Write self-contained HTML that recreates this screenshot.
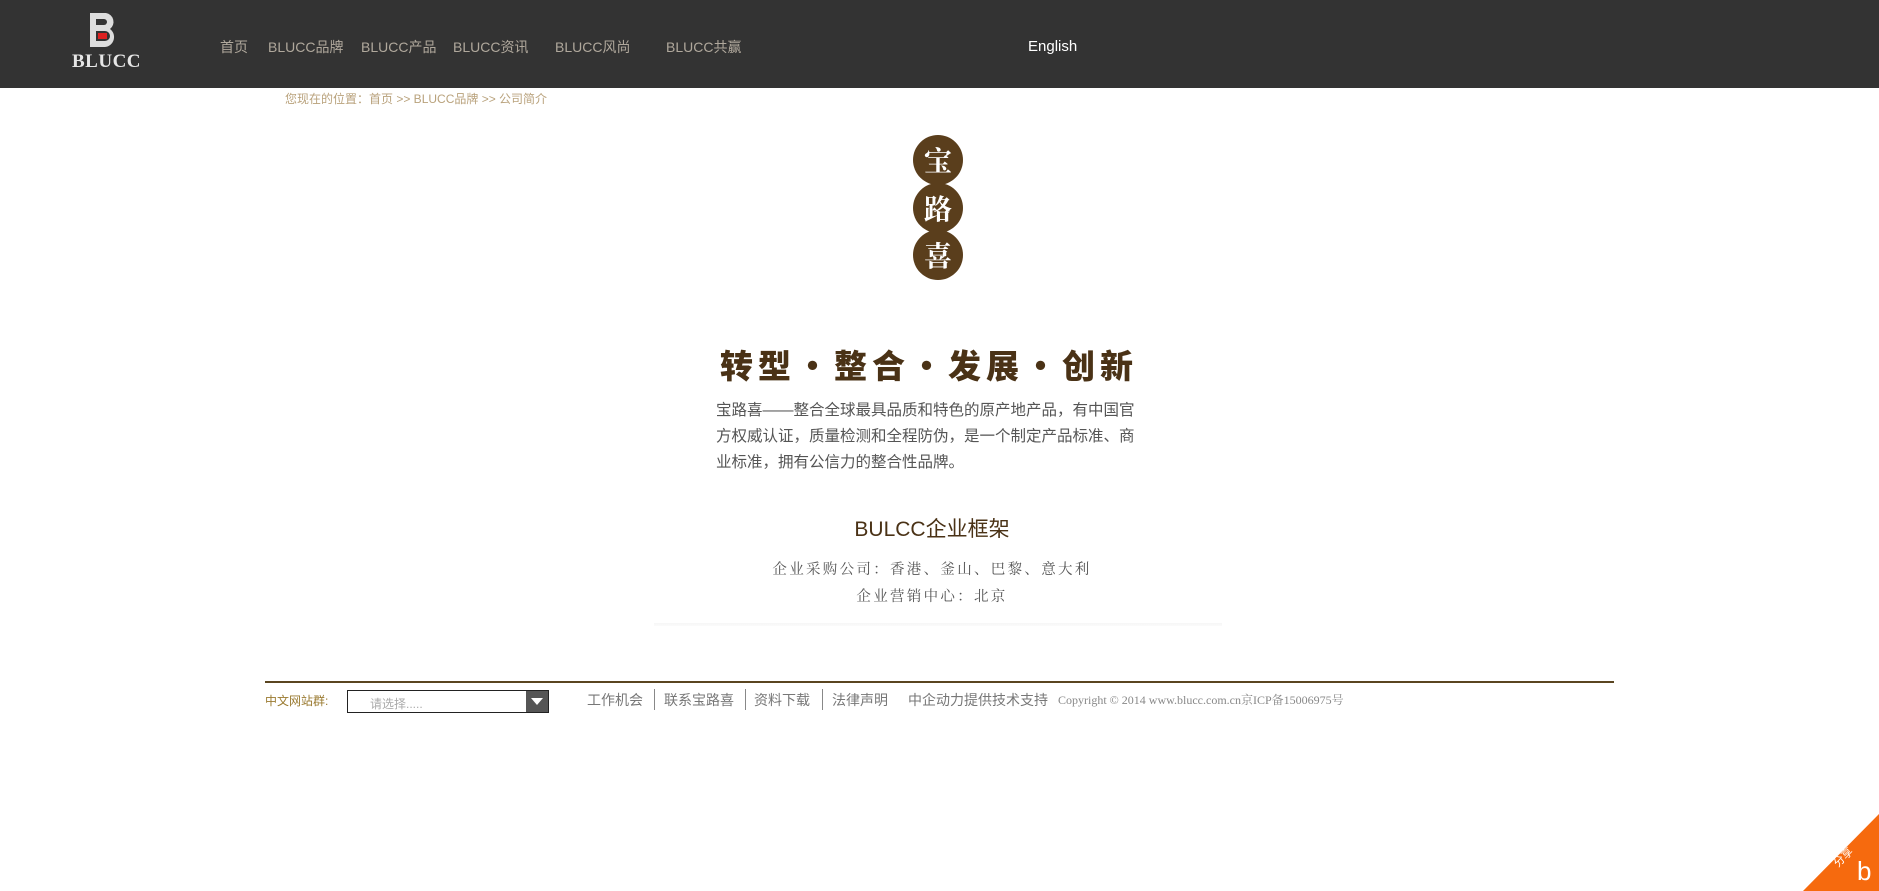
<!DOCTYPE html>
<html><head><meta charset="utf-8"><style>
*{margin:0;padding:0;box-sizing:border-box}
body{width:1879px;height:891px;background:#fff;position:relative;overflow:hidden;font-family:"Liberation Sans","Noto Sans CJK SC",sans-serif}
.a{position:absolute;white-space:nowrap}
#hd{position:absolute;left:0;top:0;width:1879px;height:88px;background:#333}
.nav{color:#b0a89c;font-size:14px;top:37px}
.c{position:absolute;left:913px;width:50px;height:50px;border-radius:50%;background:#5a3e1c;color:#fff;font-family:"Noto Serif CJK SC",serif;font-weight:bold;font-size:28px;text-align:center;line-height:50px}
.lk{color:#777;font-size:14px;top:690px}
.sep{position:absolute;top:689px;width:1px;height:21px;background:#888}
</style></head><body>
<div id="hd"></div>
<svg class="a" style="left:88px;top:11px" width="32" height="38" viewBox="0 0 32 38">
<path d="M2 2h16a9 9 0 0 1 4 16a10 10 0 0 1-5 18H2z" fill="#ddd"/>
<path d="M8 8h8a3 3 0 0 1 0 6H8z" fill="#333"/>
<path d="M8 20h9a5 5 0 0 1 0 10H8z" fill="#333"/>
<rect x="10" y="22" width="9" height="6" fill="#d22"/>
</svg>
<div class="a" style="left:72px;top:51px;color:#e6e6e6;font-family:'Liberation Serif',serif;font-weight:bold;font-size:19px;letter-spacing:0.5px">BLUCC</div>
<div class="a nav" style="left:220px">首页</div>
<div class="a nav" style="left:268px">BLUCC品牌</div>
<div class="a nav" style="left:361px">BLUCC产品</div>
<div class="a nav" style="left:453px">BLUCC资讯</div>
<div class="a nav" style="left:555px">BLUCC风尚</div>
<div class="a nav" style="left:666px">BLUCC共赢</div>
<div class="a" style="left:1028px;top:38px;color:#fff;font-size:15px">English</div>
<div class="a" style="left:285px;top:90px;color:#b9a27c;font-size:12px">您现在的位置：首页 &gt;&gt; BLUCC品牌 &gt;&gt; 公司简介</div>
<div class="c" style="top:135px">宝</div>
<div class="c" style="top:183px">路</div>
<div class="c" style="top:230px">喜</div>
<div class="a" style="left:720px;top:340px;color:#4a3216;font-family:'Noto Sans CJK SC',sans-serif;font-weight:900;font-size:33px;letter-spacing:5px">转型·整合·发展·创新</div>
<div class="a" style="left:716px;top:398px;width:424px;white-space:normal;color:#555;font-size:15.5px;line-height:26px">宝路喜——整合全球最具品质和特色的原产地产品，有中国官方权威认证，质量检测和全程防伪，是一个制定产品标准、商业标准，拥有公信力的整合性品牌。</div>
<div class="a" style="left:0;width:1864px;text-align:center;top:513px;color:#4a3216;font-size:21px">BULCC企业框架</div>
<div class="a" style="left:0;width:1864px;text-align:center;top:558px;color:#555;font-family:'Noto Serif CJK SC',serif;font-size:14.5px;letter-spacing:2.3px">企业采购公司：香港、釜山、巴黎、意大利</div>
<div class="a" style="left:0;width:1864px;text-align:center;top:585px;color:#555;font-family:'Noto Serif CJK SC',serif;font-size:14.5px;letter-spacing:2.3px">企业营销中心：北京</div>
<div class="a" style="left:654px;top:623px;width:568px;height:3px;background:linear-gradient(#f6f6f6,#fbfbfb)"></div>
<div class="a" style="left:265px;top:681px;width:1349px;height:2px;background:#5a4520"></div>
<div class="a" style="left:265px;top:692px;color:#9a7a30;font-size:12px">中文网站群:</div>
<div class="a" style="left:347px;top:690px;width:202px;height:23px;border:1px solid #222;background:#fff"></div>
<div class="a" style="left:370px;top:695px;color:#aaa;font-size:12px">请选择.....</div>
<div class="a" style="left:526px;top:691px;width:22px;height:21px;background:#555"></div>
<div class="a" style="left:531px;top:698px;width:0;height:0;border-left:6px solid transparent;border-right:6px solid transparent;border-top:7px solid #fff"></div>
<div class="a lk" style="left:587px">工作机会</div>
<div class="sep" style="left:654px"></div>
<div class="a lk" style="left:664px">联系宝路喜</div>
<div class="sep" style="left:745px"></div>
<div class="a lk" style="left:754px">资料下载</div>
<div class="sep" style="left:822px"></div>
<div class="a lk" style="left:832px">法律声明</div>
<div class="a lk" style="left:908px">中企动力提供技术支持</div>
<div class="a" style="left:1058px;top:691px;color:#888;font-family:'Liberation Serif','Noto Serif CJK SC',serif;font-size:12px">Copyright © 2014 www.blucc.com.cn京ICP备15006975号</div>
<svg class="a" style="left:1800px;top:814px" width="79" height="77" viewBox="0 0 79 77"><path d="M79 0V77H3z" fill="#f66a0e"/></svg>
<div class="a" style="left:1832px;top:849px;color:#fff;font-size:11px;transform:rotate(-45deg)">分享</div>
<div class="a" style="left:1857px;top:856px;color:#fff;font-size:26px">b</div>
</body></html>
